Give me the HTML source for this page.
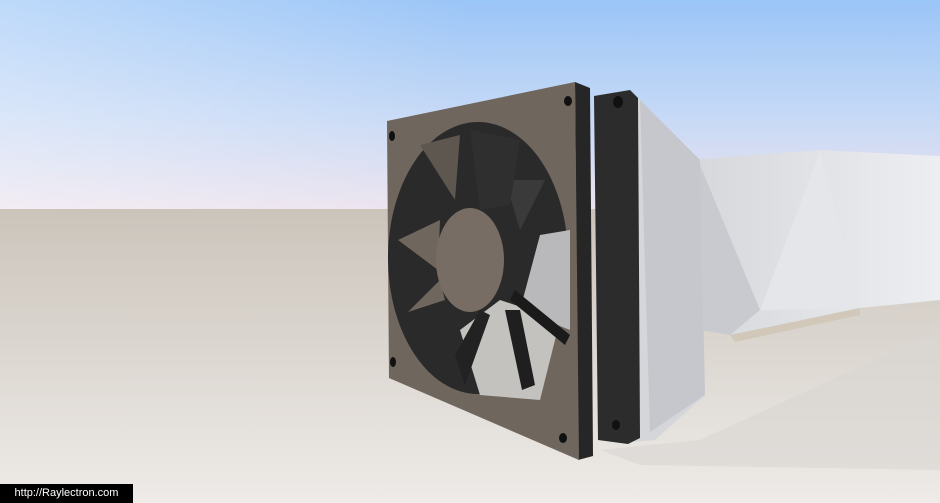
<!DOCTYPE html>
<html><head><style>
html,body{margin:0;padding:0;width:940px;height:503px;overflow:hidden;}
svg{display:block}
.wm{position:absolute;left:0;top:484px;width:133px;height:19px;background:#000;color:#fff;font:11px "Liberation Sans",sans-serif;line-height:19px;text-align:center;}
</style></head><body>
<svg width="940" height="503" viewBox="0 0 940 503">
<defs>
<linearGradient id="sky" x1="0" y1="0" x2="0" y2="1">
<stop offset="0" stop-color="#9ac5f7"/><stop offset="0.55" stop-color="#c6d9f6"/><stop offset="1" stop-color="#ece3ee"/>
</linearGradient>
<linearGradient id="skyl" x1="0" y1="0" x2="1" y2="0">
<stop offset="0" stop-color="#fff" stop-opacity="0.35"/><stop offset="0.5" stop-color="#fff" stop-opacity="0"/>
</linearGradient>
<linearGradient id="gnd" x1="0" y1="0" x2="0" y2="1">
<stop offset="0" stop-color="#cbc4bb"/><stop offset="1" stop-color="#eeebe8"/>
</linearGradient>
<linearGradient id="duct" x1="0" y1="0" x2="1" y2="0">
<stop offset="0" stop-color="#d6d7db"/><stop offset="1" stop-color="#eceef1"/>
</linearGradient>
</defs>
<rect width="940" height="210" fill="url(#sky)"/>
<rect width="940" height="210" fill="url(#skyl)"/>
<rect y="209" width="940" height="294" fill="url(#gnd)"/>
<!-- shadow on ground right -->
<polygon points="600,450 700,440 940,330 940,470 640,465" fill="#d8d5d2" opacity="0.6"/>
<!-- tube -->
<polygon points="690,160 820,150 940,156 940,300 860,308 730,335 700,330" fill="url(#duct)"/>
<polygon points="700,165 760,310 730,335 700,330" fill="#c9cacf"/>
<polygon points="820,152 760,310 860,308" fill="#e4e6ea"/>
<polygon points="730,335 860,308 860,315 735,342" fill="#d2c8ba"/>
<!-- duct body -->
<polygon points="632,92 700,160 705,395 655,440 632,442" fill="#d5d6da"/>
<polygon points="640,100 700,160 705,395 650,432" fill="#c6c7cc"/>
<!-- back fan -->
<polygon points="594,96 630,90 638,98 640,438 628,444 598,440" fill="#2c2c2c"/>
<ellipse cx="618" cy="102" rx="5" ry="6" fill="#111"/>
<ellipse cx="616" cy="425" rx="4" ry="5" fill="#111"/>
<!-- front fan edge -->
<polygon points="575,82 590,88 593,456 578,460" fill="#262626"/>
<!-- front plate -->
<polygon points="387,121 575,82 579,460 389,378" fill="#6f665d"/>
<ellipse cx="478" cy="258" rx="90" ry="136" fill="#2a2a2a"/>
<!-- light areas behind -->
<polygon points="460,330 500,300 560,320 540,400 480,395" fill="#c4c2bf"/>
<polygon points="540,235 570,230 570,330 520,310" fill="#b9b9bb"/>
<!-- blades light -->
<polygon points="398,240 440,220 438,270" fill="#6f665d"/>
<polygon points="408,312 440,280 445,300" fill="#6f665d"/>
<polygon points="420,145 460,135 455,200" fill="#5e5750"/>
<polygon points="505,180 545,180 520,230" fill="#3a3a3a"/>
<polygon points="470,130 520,140 510,205 480,210" fill="#2f2f2f"/>
<polygon points="455,355 480,310 490,315 465,385" fill="#222"/>
<polygon points="505,310 520,310 535,385 522,390" fill="#1f1f1f"/>
<polygon points="515,290 570,335 565,345 510,300" fill="#1a1a1a"/>
<!-- hub -->
<ellipse cx="470" cy="260" rx="34" ry="52" fill="#776d64"/>
<!-- holes -->
<ellipse cx="568" cy="101" rx="4" ry="5" fill="#111"/>
<ellipse cx="392" cy="136" rx="3" ry="5" fill="#111"/>
<ellipse cx="393" cy="362" rx="3" ry="5" fill="#111"/>
<ellipse cx="563" cy="438" rx="4" ry="5" fill="#111"/>
</svg>
<div class="wm">http://Raylectron.com</div>
</body></html>
